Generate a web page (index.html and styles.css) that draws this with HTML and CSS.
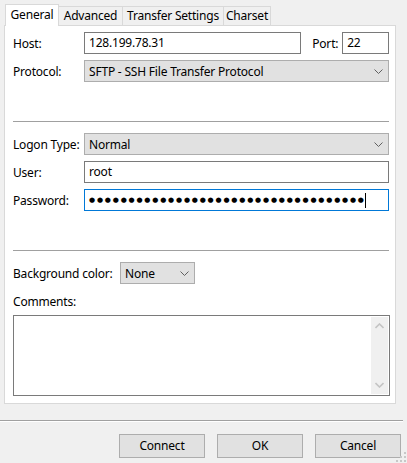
FILE: index.html
```html
<!DOCTYPE html>
<html>
<head>
<meta charset="utf-8">
<link rel="stylesheet" href="styles.css">
</head>
<body>
<div class="dialog">
  <div class="tabs">
    <div class="tab active">General</div>
    <div class="tab">Advanced</div>
    <div class="tab">Transfer Settings</div>
    <div class="tab">Charset</div>
  </div>
  <div class="panel">
    <div class="row">
      <span class="label">Host:</span>
      <div class="field host">128.199.78.31</div>
      <span class="port-label">Port:</span>
      <div class="field port">22</div>
    </div>
    <div class="row">
      <span class="label">Protocol:</span>
      <div class="select wide"><span>SFTP - SSH File Transfer Protocol</span><svg class="chev" width="9" height="5" viewBox="0 0 9 5"><path d="M0.5 0.5 L4.5 4.5 L8.5 0.5" fill="none" stroke="#606060" stroke-width="1"/></svg></div>
    </div>
    <div class="sep sep1"></div>
    <div class="row">
      <span class="label">Logon Type:</span>
      <div class="select wide"><span>Normal</span><svg class="chev" width="9" height="5" viewBox="0 0 9 5"><path d="M0.5 0.5 L4.5 4.5 L8.5 0.5" fill="none" stroke="#606060" stroke-width="1"/></svg></div>
    </div>
    <div class="row">
      <span class="label">User:</span>
      <div class="field wide">root</div>
    </div>
    <div class="row">
      <span class="label">Password:</span>
      <div class="field wide focus"><span class="dots">●●●●●●●●●●●●●●●●●●●●●●●●●●●●●●●●●●●</span><span class="caret"></span></div>
    </div>
    <div class="sep sep2"></div>
    <div class="row">
      <span class="label bglabel">Background color:</span>
      <div class="select small"><span>None</span><svg class="chev" width="9" height="5" viewBox="0 0 9 5"><path d="M0.5 0.5 L4.5 4.5 L8.5 0.5" fill="none" stroke="#606060" stroke-width="1"/></svg></div>
    </div>
    <div class="comments-label">Comments:</div>
    <div class="textarea">
      <div class="scrollbar">
        <svg width="9" height="6" viewBox="0 0 9 6"><path d="M0.5 5 L4.5 1 L8.5 5" fill="none" stroke="#c4c4c4" stroke-width="1.6"/></svg>
        <svg width="9" height="6" viewBox="0 0 9 6"><path d="M0.5 1 L4.5 5 L8.5 1" fill="none" stroke="#c4c4c4" stroke-width="1.6"/></svg>
      </div>
    </div>
  </div>
  <div class="footer-sep"></div>
  <div class="buttons">
    <div class="btn">Connect</div>
    <div class="btn">OK</div>
    <div class="btn">Cancel</div>
  </div>
  <svg class="grip" width="10" height="10" viewBox="0 0 10 10">
    <rect x="8" y="0" width="2" height="2" fill="#c8c8c8"/>
    <rect x="4" y="4" width="2" height="2" fill="#c8c8c8"/>
    <rect x="8" y="4" width="2" height="2" fill="#c8c8c8"/>
    <rect x="0" y="8" width="2" height="2" fill="#c8c8c8"/>
    <rect x="4" y="8" width="2" height="2" fill="#c8c8c8"/>
    <rect x="8" y="8" width="2" height="2" fill="#c8c8c8"/>
  </svg>
</div>
</body>
</html>
```

FILE: styles.css
```css
html, body {
  margin: 0;
  padding: 0;
  background: #f0f0f0;
}
body {
  font-family: "Noto Sans", "Open Sans", sans-serif;
  font-size: 12px;
  letter-spacing: -0.2px;
  color: #000;
}
.dialog {
  position: relative;
  width: 407px;
  height: 463px;
  overflow: hidden;
}
.tabs {
  display: flex;
  align-items: flex-end;
  padding: 4px 0 0 5px;
  height: 21px;
  position: relative;
  z-index: 2;
}
.tab {
  height: 19px;
  line-height: 18px;
  padding: 0;
  border: 1px solid #d9d9d9;
  border-bottom: none;
  border-left: none;
  background: #f0f0f0;
  box-sizing: border-box;
  white-space: nowrap;
  text-align: center;
}
.tab.active {
  height: 22px;
  line-height: 19px;
  background: #fff;
  border-left: 1px solid #d9d9d9;
  margin-bottom: -1px;
  width: 54px;
}
.tab:nth-child(2) { width: 64px; }
.tab:nth-child(3) { width: 101px; }
.tab:nth-child(4) { width: 47px; }
.panel {
  margin: 0 11px 0 4px;
  background: #fff;
  border: 1px solid #d9d9d9;
  padding: 6px 6px 7px 8px;
  display: flex;
  flex-direction: column;
  gap: 6px;
  position: relative;
  z-index: 1;
}
.row {
  display: flex;
  align-items: center;
  height: 22px;
}
.label {
  width: 71px;
  flex: none;
}
.bglabel { width: 107px; }
.field {
  height: 22px;
  box-sizing: border-box;
  border: 1px solid #7a7a7a;
  background: #fff;
  padding: 0 4px;
  line-height: 20px;
  display: flex;
  align-items: center;
}
.host { width: 218px; }
.port-label {
  margin-left: 11px;
  width: 30px;
}
.port { width: 47px; }
.wide { width: 306px; }
.focus { border-color: #0078d7; }
.select {
  height: 22px;
  box-sizing: border-box;
  border: 1px solid #adadad;
  background: #e1e1e1;
  padding: 0 5px 0 4px;
  display: flex;
  align-items: center;
  justify-content: space-between;
}
.select.small { width: 75px; }
.chev { flex: none; }
.sep {
  height: 1px;
  background: #a0a0a0;
  width: 376px;
}
.sep1 { margin: 33px 0 5px; }
.sep2 { margin: 33px 0 5px; }
.dots {
  font-family: "DejaVu Sans", sans-serif;
  font-size: 7px;
  letter-spacing: 1.8px;
  line-height: 20px;
  white-space: nowrap;
}
.caret {
  display: inline-block;
  width: 1px;
  height: 15px;
  background: #000;
  margin-left: -1px;
}
.comments-label {
  height: 18px;
  line-height: 18px;
  margin-top: 3px;
}
.textarea {
  margin-top: -2px;
  width: 377px;
  height: 81px;
  box-sizing: border-box;
  border: 1px solid #7a7a7a;
  background: #fff;
  display: flex;
  justify-content: flex-end;
  padding: 1px;
}
.scrollbar {
  width: 17px;
  background: #f0f0f0;
  display: flex;
  flex-direction: column;
  align-items: center;
  justify-content: space-between;
  padding: 6px 0 6px;
}
.footer-sep {
  margin-top: 16px;
  height: 1px;
  background: #a0a0a0;
  border-bottom: 1px solid #fff;
  width: 403px;
}
.buttons {
  display: flex;
  justify-content: flex-end;
  gap: 12px;
  padding: 12px 6px 0 0;
}
.btn {
  width: 86px;
  height: 24px;
  box-sizing: border-box;
  border: 1px solid #adadad;
  background: #e1e1e1;
  text-align: center;
  line-height: 22px;
}
.grip {
  position: absolute;
  right: 1px;
  bottom: 1px;
}
```
